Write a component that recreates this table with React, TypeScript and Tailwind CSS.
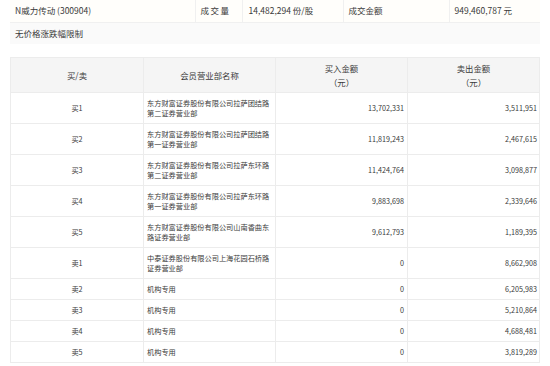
const rows = [
  { side: '买1', name: '东方财富证券股份有限公司拉萨团结路第二证券营业部', buy: '13,702,331', sell: '3,511,951' },
  { side: '买2', name: '东方财富证券股份有限公司拉萨团结路第一证券营业部', buy: '11,819,243', sell: '2,467,615' },
  { side: '买3', name: '东方财富证券股份有限公司拉萨东环路第二证券营业部', buy: '11,424,764', sell: '3,098,877' },
  { side: '买4', name: '东方财富证券股份有限公司拉萨东环路第一证券营业部', buy: '9,883,698', sell: '2,339,646' },
  { side: '买5', name: '东方财富证券股份有限公司山南香曲东路证券营业部', buy: '9,612,793', sell: '1,189,395' },
  { side: '卖1', name: '中泰证券股份有限公司上海花园石桥路证券营业部', buy: '0', sell: '8,662,908' },
  { side: '卖2', name: '机构专用', buy: '0', sell: '6,205,983' },
  { side: '卖3', name: '机构专用', buy: '0', sell: '5,210,864' },
  { side: '卖4', name: '机构专用', buy: '0', sell: '4,688,481' },
  { side: '卖5', name: '机构专用', buy: '0', sell: '3,819,289' },
]

export default function App() {
  return (
    <div
      className="w-[550px] h-[366px] overflow-hidden bg-white text-[#3a3a3a]"
      style={{ fontFamily: '"Noto Sans CJK SC", "Noto Sans", sans-serif' }}
    >
      <div className="px-[10px]">
        {/* summary */}
        <table className="w-[530px] table-fixed border-collapse text-[8.5px] leading-[11px]">
          <colgroup>
            <col className="w-[185px]" />
            <col className="w-[47px]" />
            <col className="w-[101px]" />
            <col className="w-[106px]" />
            <col />
          </colgroup>
          <tbody>
            <tr className="h-[22px] bg-[#fffefb]">
              <td className="border-b border-[#f0f0f0] px-[5px]">N威力传动 (300904)</td>
              <td className="border-b border-l border-[#f0f0f0] px-[5px] tracking-[1.5px]">成交量</td>
              <td className="border-b border-l border-[#f0f0f0] px-[6px]">14,482,294 份/股</td>
              <td className="border-b border-l border-[#f0f0f0] px-[5px]">成交金额</td>
              <td className="border-b border-l border-[#f0f0f0] px-[5px]">949,460,787 元</td>
            </tr>
            <tr className="h-[22px] bg-[#fafafa]">
              <td colSpan={5} className="px-[5px]">无价格涨跌幅限制</td>
            </tr>
          </tbody>
        </table>

        {/* dragon-tiger list */}
        <table className="mt-[13px] w-[530px] table-fixed border-collapse text-[7.2px] leading-[10px]">
          <colgroup>
            <col className="w-[133px]" />
            <col className="w-[132px]" />
            <col className="w-[132px]" />
            <col />
          </colgroup>
          <thead>
            <tr className="h-[35px] bg-[#f5f5f5] text-[8.4px] leading-[14px]">
              <th className="border border-[#ececec] font-normal">买/卖</th>
              <th className="border border-[#ececec] font-normal">会员营业部名称</th>
              <th className="border border-[#ececec] font-normal">
                买入金额
                <br />
                （元）
              </th>
              <th className="border border-[#ececec] font-normal">
                卖出金额
                <br />
                （元）
              </th>
            </tr>
          </thead>
          <tbody>
            {rows.map(r => (
              <tr key={r.side} className={r.name.length > 17 ? 'h-[31px]' : 'h-[21px]'}>
                <td className="border border-[#ececec] text-center">{r.side}</td>
                <td className="border border-[#ececec] px-[3px] break-all">{r.name}</td>
                <td className="border border-[#ececec] px-[3px] text-right">{r.buy}</td>
                <td className="border border-[#ececec] px-[2px] text-right">{r.sell}</td>
              </tr>
            ))}
          </tbody>
        </table>
      </div>
    </div>
  )
}
